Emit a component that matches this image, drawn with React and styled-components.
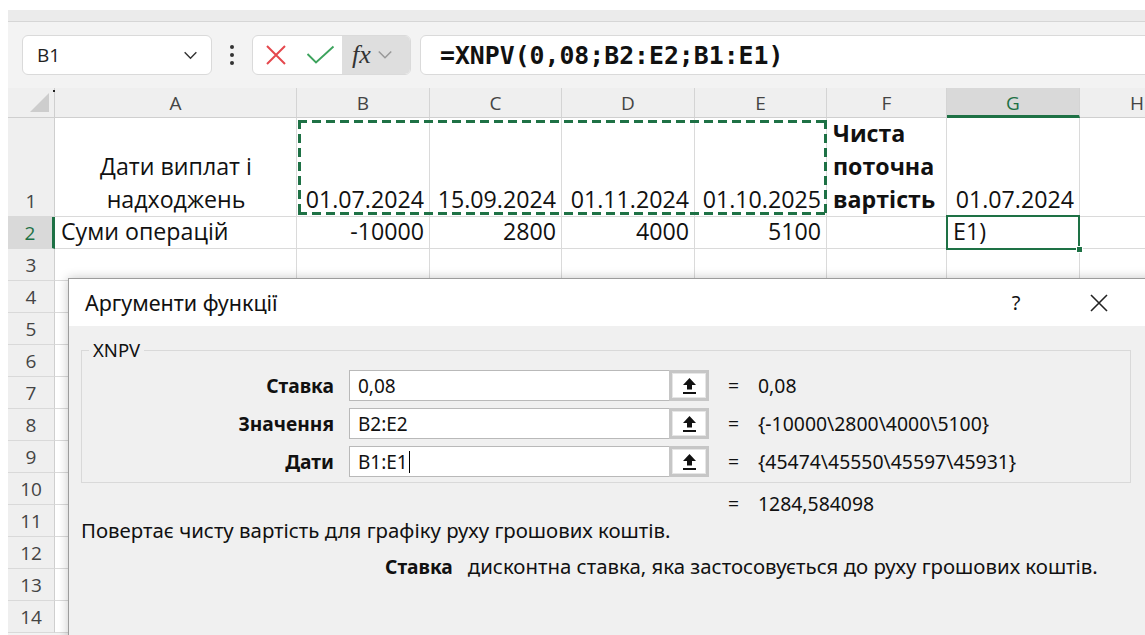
import React from "react";
import styled, { createGlobalStyle } from "styled-components";

const GlobalStyle = createGlobalStyle`
  html, body { margin: 0; padding: 0; background: #fff; }
  body { overflow: hidden; }
  *, *::before, *::after { box-sizing: border-box; }
`;

const GREEN = "#1e7145";

const Page = styled.div`
  position: relative;
  width: 1145px;
  height: 635px;
  overflow: hidden;
  background: #fff;
  padding: 10px 0 0 8px;
  font-family: "Open Sans", "Noto Sans", sans-serif;
  color: #111;
`;

const Workbook = styled.div`
  display: flex;
  flex-direction: column;
  background: #f3f3f3;
  height: 100%;
`;

const RibbonEdge = styled.div`
  height: 12px;
  background: #ebebeb;
  border-bottom: 1px solid #d6d6d6;
`;

const FormulaBar = styled.div`
  display: flex;
  align-items: center;
  height: 66px;
  padding-left: 14px;
`;

const NameBox = styled.div`
  display: flex;
  align-items: center;
  justify-content: space-between;
  width: 190px;
  height: 40px;
  padding: 0 13px 0 14px;
  background: #fff;
  border: 1px solid #dadada;
  border-radius: 6px;
  font-size: 19px;
  color: #222;
`;

const Kebab = styled.div`
  width: 40px;
  display: flex;
  flex-direction: column;
  align-items: center;
  gap: 4px;
  span {
    width: 4px;
    height: 4px;
    border-radius: 50%;
    background: #333;
  }
`;

const FxGroup = styled.div`
  display: flex;
  width: 159px;
  height: 40px;
  background: #fff;
  border: 1px solid #dadada;
  border-radius: 6px;
  overflow: hidden;
`;

const IconButton = styled.div`
  width: ${(p) => p.$w}px;
  display: flex;
  align-items: center;
  justify-content: center;
`;

const FxButton = styled.div`
  flex: 1;
  display: flex;
  align-items: center;
  gap: 6px;
  padding-left: 10px;
  background: #dedede;
  font-family: "Liberation Serif", "DejaVu Serif", serif;
  font-style: italic;
  font-size: 26px;
  color: #333;
`;

const FormulaInput = styled.div`
  flex: 1;
  margin-left: 9px;
  margin-right: -20px;
  height: 40px;
  display: flex;
  align-items: center;
  padding-left: 19px;
  background: #fff;
  border: 1px solid #dadada;
  border-radius: 6px;
  font-family: "DejaVu Sans Mono", "Liberation Mono", monospace;
  font-weight: 700;
  font-size: 24.8px;
  color: #111;
`;

const Sheet = styled.div`
  position: relative;
  display: grid;
  grid-template-columns: 47px 242px 133px 132px 133px 132px 120px 133px 115px;
  grid-template-rows: 30px 99px repeat(13, 32px);
  background: #fff;
`;

const Corner = styled.div`
  grid-row: 1;
  grid-column: 1;
  position: relative;
  background: #efefef;
  border-right: 1px solid #cfcfcf;
  border-bottom: 1px solid #cfcfcf;
  &::after {
    content: "";
    position: absolute;
    right: 5px;
    bottom: 5px;
    width: 19px;
    height: 19px;
    background: #cdcdcd;
    clip-path: polygon(100% 0, 100% 100%, 0 100%);
  }
  &::before {
    content: "";
    position: absolute;
    right: -1px;
    top: 2px;
    width: 2px;
    height: 2px;
    background: #222;
  }
`;

const ColHead = styled.div`
  grid-row: 1;
  grid-column: ${(p) => p.$c};
  display: flex;
  align-items: center;
  justify-content: center;
  background: ${(p) => (p.$active ? "#d9d9d9" : "#efefef")};
  border-right: 1px solid #d4d4d4;
  border-bottom: ${(p) => (p.$active ? `3px solid ${GREEN}` : "1px solid #cfcfcf")};
  color: ${(p) => (p.$active ? GREEN : "#444")};
  font-size: 19px;
  padding-top: ${(p) => (p.$active ? "2px" : "0")};
`;

const RowHead = styled.div`
  grid-row: ${(p) => p.$r};
  grid-column: 1;
  display: flex;
  align-items: flex-end;
  justify-content: center;
  padding-bottom: 1px;
  background: ${(p) => (p.$active ? "#d9d9d9" : "#efefef")};
  border-right: ${(p) => (p.$active ? `3px solid ${GREEN}` : "1px solid #cfcfcf")};
  border-bottom: 1px solid #d9d9d9;
  color: ${(p) => (p.$active ? GREEN : "#444")};
  font-size: 19px;
  line-height: 28px;
`;

const Cell = styled.div`
  grid-row: ${(p) => p.$r};
  grid-column: ${(p) => p.$c};
  display: flex;
  flex-direction: column;
  justify-content: flex-end;
  align-items: ${(p) =>
    p.$align === "right" ? "flex-end" : p.$align === "center" ? "center" : "flex-start"};
  text-align: ${(p) => p.$align || "left"};
  padding: 0 5px 0 6px;
  border-right: 1px solid #dadada;
  border-bottom: 1px solid #dadada;
  font-size: 23.2px;
  line-height: 33px;
  font-weight: ${(p) => (p.$bold ? 700 : 400)};
  white-space: nowrap;
`;

const Marquee = styled.div`
  grid-column: 3 / 7;
  grid-row: 2;
  margin: 2px 0 2px 1px;
  pointer-events: none;
  background-image:
    repeating-linear-gradient(90deg, ${GREEN} 0 9px, transparent 9px 14px),
    repeating-linear-gradient(90deg, ${GREEN} 0 9px, transparent 9px 14px),
    repeating-linear-gradient(180deg, ${GREEN} 0 9px, transparent 9px 14px),
    repeating-linear-gradient(180deg, ${GREEN} 0 9px, transparent 9px 14px);
  background-size: 100% 3px, 100% 3px, 3px 100%, 3px 100%;
  background-position: 0 0, 0 100%, 0 0, 100% 0;
  background-repeat: no-repeat;
`;

const ActiveCell = styled.div`
  grid-column: 8;
  grid-row: 3;
  position: relative;
  margin: -2px 0 -1px -1px;
  border: 2px solid ${GREEN};
  pointer-events: none;
  &::after {
    content: "";
    position: absolute;
    right: -5px;
    bottom: -5px;
    width: 7px;
    height: 7px;
    background: ${GREEN};
    border: 1px solid #fff;
  }
`;

/* Function arguments dialog floating over the grid */
const Dialog = styled.div`
  position: absolute;
  left: 68px;
  top: 278px;
  width: 1100px;
  height: 380px;
  background: #f0f0f0;
  border: 1px solid #9c9c9c;
  box-shadow: 0 0 10px rgba(0, 0, 0, 0.22);
  font-family: "Noto Sans", "Open Sans", sans-serif;
  font-size: 19.4px;
  color: #111;
`;

const TitleBar = styled.div`
  display: flex;
  align-items: center;
  height: 47px;
  padding-left: 16px;
  background: #fff;
`;

const Title = styled.div`
  flex: 1;
  font-size: 21.5px;
`;

const TitleButton = styled.div`
  width: 60px;
  display: flex;
  justify-content: center;
  align-items: center;
  font-size: 20px;
  margin-right: ${(p) => p.$mr || 0}px;
`;

const Body = styled.div`
  padding-top: 14px;
`;

const GroupBox = styled.fieldset`
  margin: 0 0 0 12px;
  width: 1050px;
  padding: 0 0 5px 0;
  border: 1px solid #d9d9d9;
  legend {
    margin-left: 7px;
    padding: 0 4px;
    line-height: 20px;
    font-size: 18.5px;
  }
`;

const ArgList = styled.div`
  display: flex;
  flex-direction: column;
  gap: 7px;
  margin-top: 10px;
`;

const ArgRow = styled.div`
  display: flex;
  align-items: center;
  height: 31px;
`;

const ArgLabel = styled.div`
  width: 252px;
  text-align: right;
  font-weight: 700;
  font-size: 19.2px;
`;

const ArgInput = styled.div`
  width: 320px;
  height: 31px;
  margin-left: 15px;
  display: flex;
  align-items: center;
  padding-left: 8px;
  background: #fff;
  border: 1px solid #b9b9b9;
  border-right: none;
  font-size: 19px;
`;

const Caret = styled.span`
  display: inline-block;
  width: 1px;
  height: 22px;
  margin-left: 1px;
  background: #000;
`;

const RefButton = styled.div`
  width: 40px;
  height: 31px;
  display: flex;
  align-items: center;
  justify-content: center;
  background: #fff;
  border: 3px solid #c6c6c6;
  box-shadow: inset 0 0 0 1px #e6e6e6;
`;

const Eq = styled.span`
  display: inline-block;
  margin-left: 19px;
  width: 11px;
`;

const Value = styled.span`
  display: inline-block;
  margin-left: 19px;
`;

const ResultRow = styled.div`
  display: flex;
  align-items: center;
  height: 22px;
  margin-top: 9px;
  padding-left: 640px;
`;

const Description = styled.div`
  margin: 4px 0 0 12px;
  line-height: 24px;
  font-size: 20.4px;
`;

const ArgHelp = styled.div`
  margin: 12px 0 0 316px;
  line-height: 24px;
  font-size: 20.4px;
  b {
    font-weight: 700;
    font-size: 19.2px;
    margin-right: 15px;
  }
`;

const Chevron = ({ color = "#333", size = 16 }) => (
  <svg width={size} height={size * 0.6} viewBox="0 0 16 10" fill="none">
    <path d="M1.5 1.5 L8 8 L14.5 1.5" stroke={color} strokeWidth="1.6" />
  </svg>
);

const CancelIcon = () => (
  <svg width="22" height="22" viewBox="0 0 22 22" fill="none">
    <path d="M2 2 L20 20 M20 2 L2 20" stroke="#e5484d" strokeWidth="2" />
  </svg>
);

const EnterIcon = () => (
  <svg width="29" height="20" viewBox="0 0 29 20" fill="none">
    <path d="M1.5 9 L10 17.5 L27.5 1.5" stroke="#3da35d" strokeWidth="1.9" />
  </svg>
);

const RefArrow = () => (
  <svg width="15" height="18" viewBox="0 0 15 18">
    <path d="M7.5 1 L14 8 H10 V12.5 H5 V8 H1 Z" fill="#111" />
    <rect x="1" y="15" width="13" height="2" fill="#111" />
  </svg>
);

const CloseIcon = () => (
  <svg width="20" height="20" viewBox="0 0 20 20" fill="none">
    <path d="M2 2 L18 18 M18 2 L2 18" stroke="#222" strokeWidth="1.6" />
  </svg>
);

const columns = ["A", "B", "C", "D", "E", "F", "G", "H"];

const rows = {
  1: [
    { text: "Дати виплат і\nнадходжень", align: "center" },
    { text: "01.07.2024", align: "right" },
    { text: "15.09.2024", align: "right" },
    { text: "01.11.2024", align: "right" },
    { text: "01.10.2025", align: "right" },
    { text: "Чиста\nпоточна\nвартість", bold: true },
    { text: "01.07.2024", align: "right" },
  ],
  2: [
    { text: "Суми операцій" },
    { text: "-10000", align: "right" },
    { text: "2800", align: "right" },
    { text: "4000", align: "right" },
    { text: "5100", align: "right" },
    { text: "" },
    { text: "E1)" },
  ],
};

const args = [
  { label: "Ставка", input: "0,08", value: "0,08" },
  { label: "Значення", input: "B2:E2", value: "{-10000\\2800\\4000\\5100}" },
  { label: "Дати", input: "B1:E1", value: "{45474\\45550\\45597\\45931}", focused: true },
];

function SheetGrid() {
  const items = [<Corner key="corner" />];
  columns.forEach((c, i) =>
    items.push(
      <ColHead key={`col-${c}`} $c={i + 2} $active={c === "G"}>
        {c}
      </ColHead>
    )
  );
  for (let r = 1; r <= 14; r++) {
    const gridRow = r + 1;
    items.push(
      <RowHead key={`row-${r}`} $r={gridRow} $active={r === 2}>
        {r}
      </RowHead>
    );
    columns.forEach((c, i) => {
      const data = (rows[r] || [])[i] || { text: "" };
      items.push(
        <Cell key={`${c}${r}`} $r={gridRow} $c={i + 2} $align={data.align} $bold={data.bold}>
          {data.text.split("\n").map((line, j) => (
            <span key={j}>{line}</span>
          ))}
        </Cell>
      );
    });
  }
  return (
    <Sheet>
      {items}
      <Marquee />
      <ActiveCell />
    </Sheet>
  );
}

export default function App() {
  return (
    <Page>
      <GlobalStyle />
      <Workbook>
        <RibbonEdge />
        <FormulaBar>
          <NameBox>
            <span>B1</span>
            <Chevron size={15} />
          </NameBox>
          <Kebab>
            <span />
            <span />
            <span />
          </Kebab>
          <FxGroup>
            <IconButton $w={45}>
              <CancelIcon />
            </IconButton>
            <IconButton $w={44}>
              <EnterIcon />
            </IconButton>
            <FxButton>
              <span>fx</span>
              <Chevron color="#9a9a9a" size={16} />
            </FxButton>
          </FxGroup>
          <FormulaInput>=XNPV(0,08;B2:E2;B1:E1)</FormulaInput>
        </FormulaBar>
        <SheetGrid />
      </Workbook>

      <Dialog>
        <TitleBar>
          <Title>Аргументи функції</Title>
          <TitleButton $mr={23}>?</TitleButton>
          <TitleButton $mr={38}>
            <CloseIcon />
          </TitleButton>
        </TitleBar>
        <Body>
          <GroupBox>
            <legend>XNPV</legend>
            <ArgList>
              {args.map((a) => (
                <ArgRow key={a.label}>
                  <ArgLabel>{a.label}</ArgLabel>
                  <ArgInput>
                    {a.input}
                    {a.focused && <Caret />}
                  </ArgInput>
                  <RefButton>
                    <RefArrow />
                  </RefButton>
                  <Eq>=</Eq>
                  <Value>{a.value}</Value>
                </ArgRow>
              ))}
            </ArgList>
          </GroupBox>
          <ResultRow>
            <Eq>=</Eq>
            <Value>1284,584098</Value>
          </ResultRow>
          <Description>Повертає чисту вартість для графіку руху грошових коштів.</Description>
          <ArgHelp>
            <b>Ставка</b>дисконтна ставка, яка застосовується до руху грошових коштів.
          </ArgHelp>
        </Body>
      </Dialog>
    </Page>
  );
}
